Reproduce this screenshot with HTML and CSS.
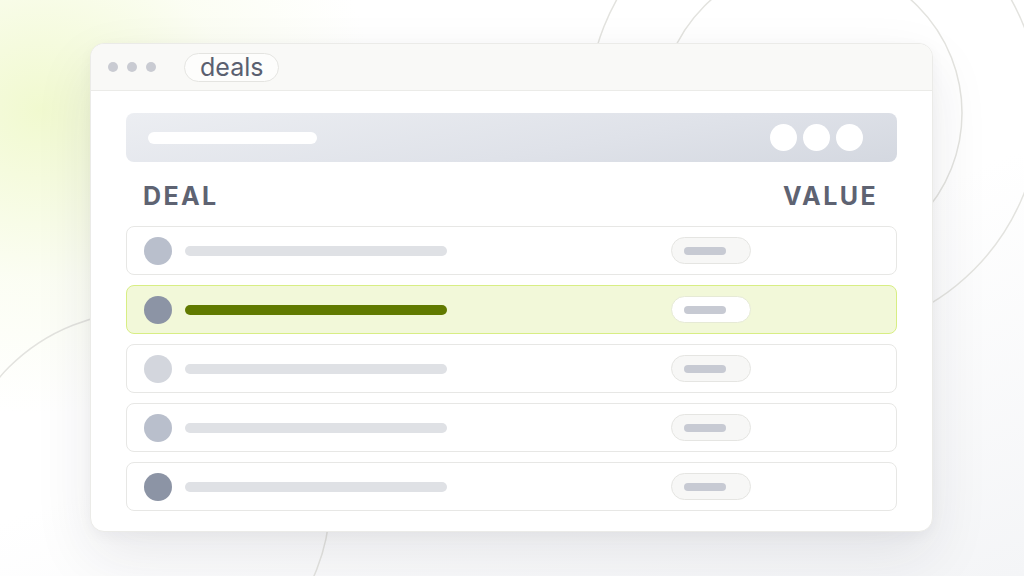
FILE: index.html
```html
<!DOCTYPE html>
<html lang="en">
<head>
<meta charset="utf-8">
<title>deals</title>
<link rel="stylesheet" href="styles.css">
</head>
<body>
<div class="page">
  <svg class="bg-rings" width="1024" height="576" viewBox="0 0 1024 576" aria-hidden="true">
    <circle cx="814" cy="110" r="226" />
    <circle cx="811" cy="113" r="151" />
    <circle cx="142" cy="500" r="188" />
  </svg>
  <div class="window">
    <div class="titlebar">
      <div class="dots"><span></span><span></span><span></span></div>
      <div class="tab">deals</div>
    </div>
    <div class="body">
      <div class="toolbar">
        <div class="search"></div>
        <div class="actions"><span></span><span></span><span></span></div>
      </div>
      <div class="heads"><span>DEAL</span><span>VALUE</span></div>
      <div class="rows">
        <div class="row"><span class="avatar a1"></span><span class="line"></span><span class="pill"><i></i></span></div>
        <div class="row active"><span class="avatar a2"></span><span class="line"></span><span class="pill"><i></i></span></div>
        <div class="row"><span class="avatar a3"></span><span class="line"></span><span class="pill"><i></i></span></div>
        <div class="row"><span class="avatar a1"></span><span class="line"></span><span class="pill"><i></i></span></div>
        <div class="row"><span class="avatar a2"></span><span class="line"></span><span class="pill"><i></i></span></div>
      </div>
    </div>
  </div>
</div>
</body>
</html>
```

FILE: styles.css
```css
* { box-sizing: border-box; }
html, body { margin: 0; padding: 0; }
body {
  width: 1024px;
  height: 576px;
  overflow: hidden;
  font-family: Inter, "Liberation Sans", sans-serif;
  background: #ffffff;
}
.page {
  position: relative;
  width: 1024px;
  height: 576px;
  padding: 43px 0 0 90px;
  background:
    radial-gradient(ellipse 420px 380px at 40px 110px, rgba(240, 249, 205, 0.95), rgba(248, 252, 232, 0.5) 45%, rgba(255,255,255,0) 80%),
    linear-gradient(160deg, #ffffff 55%, #f4f5f7 100%);
}
.bg-rings {
  position: absolute;
  left: 0;
  top: 0;
  fill: none;
  stroke: #e3e3df;
  stroke-width: 1.5;
}
.window {
  position: relative;
  width: 843px;
  height: 489px;
  background: #ffffff;
  border: 1px solid #ebebe8;
  border-radius: 14px;
  box-shadow: 0 24px 60px rgba(30, 35, 50, 0.09), 0 4px 14px rgba(30, 35, 50, 0.04);
  overflow: hidden;
}
.titlebar {
  height: 47px;
  background: #f9f9f7;
  border-bottom: 1.5px solid #ebebe8;
  display: flex;
  align-items: center;
  padding-left: 17px;
}
.dots { display: flex; gap: 9px; }
.dots span {
  width: 10px; height: 10px; border-radius: 50%;
  background: #c9cbd2;
}
.tab {
  margin-left: 28px;
  height: 29px;
  padding: 0 15px;
  border: 1.5px solid #e4e4e1;
  border-radius: 15px;
  background: #fdfdfc;
  color: #5a6070;
  font-size: 25px;
  line-height: 26px;
  display: flex;
  align-items: center;
}
.body {
  padding: 22px 35px 0 35px;
}
.toolbar {
  height: 49px;
  border-radius: 8px;
  background: linear-gradient(170deg, #eceef2 0%, #dfe2e9 60%, #d4d8e0 100%);
  display: flex;
  align-items: center;
  justify-content: space-between;
  padding: 0 34px 0 22px;
}
.search {
  width: 169px; height: 12px; border-radius: 6px; background: #ffffff;
}
.actions { display: flex; gap: 6px; }
.actions span {
  width: 27px; height: 27px; border-radius: 50%; background: #ffffff;
}
.heads {
  height: 64px;
  display: flex;
  align-items: center;
  justify-content: space-between;
  padding: 4px 19px 0 17px;
  font-size: 25px;
  font-weight: 700;
  letter-spacing: 2.4px;
  color: #5e6372;
}
.rows { display: flex; flex-direction: column; gap: 10px; }
.row {
  height: 49px;
  border: 1.5px solid #e7e7e5;
  border-radius: 8px;
  background: #ffffff;
  display: flex;
  align-items: center;
  padding-left: 17px;
}
.row.active {
  background: #f2f8d9;
  border-color: #d8ee84;
}
.avatar {
  width: 28px; height: 28px; border-radius: 50%; flex: none;
}
.a1 { background: #b9bfcc; }
.a2 { background: #8c94a5; }
.a3 { background: #d3d6dd; }
.line {
  margin-left: 13px;
  width: 262px; height: 10px; border-radius: 5px;
  background: #dfe1e5;
}
.active .line { background: #617a00; }
.pill {
  margin-left: 224px;
  width: 80px; height: 27px; border-radius: 14px;
  border: 1.5px solid #e5e5e2;
  background: #f7f7f6;
  display: flex; align-items: center; padding-left: 12px;
}
.active .pill { background: #ffffff; border-color: #e6ead6; }
.pill i {
  display: block; width: 42px; height: 8px; border-radius: 4px; background: #c7cad3;
}
```
